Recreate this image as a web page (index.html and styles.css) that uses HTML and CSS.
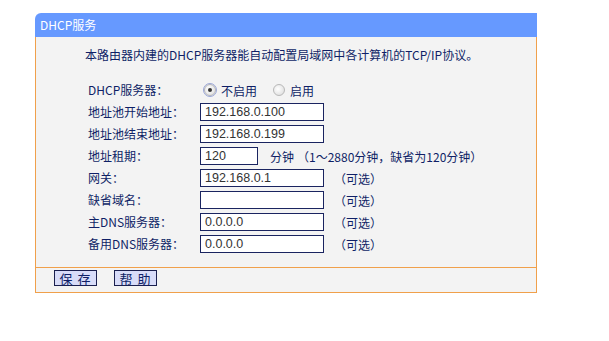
FILE: index.html
```html
<!DOCTYPE html>
<html lang="zh-CN">
<head>
<meta charset="utf-8">
<title>DHCP服务</title>
<link rel="stylesheet" href="styles.css">
</head>
<body>
<div class="panel">
  <div class="head">DHCP服务</div>
  <div class="main">
    <p class="intro">本路由器内建的DHCP服务器能自动配置局域网中各计算机的TCP/IP协议。</p>
    <div class="form">
      <div class="label">DHCP服务器：</div>
      <div class="ctrl">
        <label class="opt"><span class="radio on"></span>不启用</label>
        <label class="opt"><span class="radio"></span>启用</label>
      </div>

      <div class="label">地址池开始地址：</div>
      <div class="ctrl"><span class="box">192.168.0.100</span></div>

      <div class="label">地址池结束地址：</div>
      <div class="ctrl"><span class="box">192.168.0.199</span></div>

      <div class="label">地址租期：</div>
      <div class="ctrl"><span class="box short">120</span><span class="unit">分钟</span><span class="hint">（1～2880分钟，缺省为120分钟）</span></div>

      <div class="label">网关：</div>
      <div class="ctrl"><span class="box">192.168.0.1</span><span class="note">（可选）</span></div>

      <div class="label">缺省域名：</div>
      <div class="ctrl"><span class="box"></span><span class="note">（可选）</span></div>

      <div class="label">主DNS服务器：</div>
      <div class="ctrl"><span class="box">0.0.0.0</span><span class="note">（可选）</span></div>

      <div class="label">备用DNS服务器：</div>
      <div class="ctrl"><span class="box">0.0.0.0</span><span class="note">（可选）</span></div>
    </div>
  </div>
  <div class="foot">
    <span class="btn">保 存</span>
    <span class="btn">帮 助</span>
  </div>
</div>
</body>
</html>
```

FILE: styles.css
```css
html, body {
  margin: 0;
  padding: 0;
  background: #ffffff;
}

body {
  font-family: "Noto Sans CJK SC", "DejaVu Sans", sans-serif;
  font-size: 12px;
  color: #0f1f66;
}

.panel {
  width: 502px;
  margin: 13px 0 0 35px;
}

.head {
  height: 24px;
  line-height: 24px;
  background: #6699ff;
  color: #ffffff;
  padding-left: 5px;
  border-top-left-radius: 6px;
  font-size: 12px;
}

.main {
  background: #f3f3f3;
  border-left: 1px solid #f0a04b;
  border-right: 1px solid #f0a04b;
  border-bottom: 1px solid #f0a04b;
  padding-top: 9px;
  box-sizing: border-box;
  height: 231px;
}

.intro {
  margin: 0 0 15px 49px;
  line-height: 18px;
}

.form {
  display: grid;
  grid-template-columns: 112px auto;
  grid-auto-rows: 22px;
  margin-left: 52px;
}

.label, .ctrl {
  display: flex;
  align-items: center;
}

.label {
  padding-bottom: 2px;
}

.opt {
  display: flex;
  align-items: center;
  margin-right: 12px;
}

.radio {
  width: 12px;
  height: 12px;
  border-radius: 50%;
  border: 1px solid #b8b8b8;
  background: radial-gradient(circle at 40% 40%, #ffffff 0%, #e4e4e4 70%, #d2d2d2 100%);
  box-sizing: border-box;
  margin: 0 5px 0 4px;
  position: relative;
}

.radio.on {
  outline: 1px solid #9aa6d8;
  outline-offset: 0px;
}

.radio.on::after {
  content: "";
  position: absolute;
  left: 3px;
  top: 3px;
  width: 4px;
  height: 4px;
  border-radius: 50%;
  background: #333333;
}

.box {
  display: flex;
  align-items: center;
  width: 124px;
  height: 18px;
  box-sizing: border-box;
  border: 1px solid #1a2460;
  background: #ffffff;
  padding-left: 4px;
  font-family: "Liberation Sans", Arial, sans-serif;
  font-size: 12.5px;
  color: #333333;
}

.box.short {
  width: 58px;
}

.unit {
  margin-left: 12px;
}

.hint {
  margin-left: 3px;
}

.note {
  margin-left: 10px;
}

.foot {
  background: #f3f3f3;
  border-left: 1px solid #f0a04b;
  border-right: 1px solid #f0a04b;
  border-bottom: 1px solid #f0a04b;
  height: 25px;
  box-sizing: border-box;
  display: flex;
  align-items: flex-start;
  padding: 2px 0 0 18px;
  gap: 17px;
}

.btn {
  display: flex;
  align-items: center;
  justify-content: center;
  width: 43px;
  height: 16px;
  box-sizing: border-box;
  background: #d8dcf8;
  border: 1px solid #1a1f4e;
  color: #0f1f66;
  font-size: 13px;
  letter-spacing: 1px;
}
```
